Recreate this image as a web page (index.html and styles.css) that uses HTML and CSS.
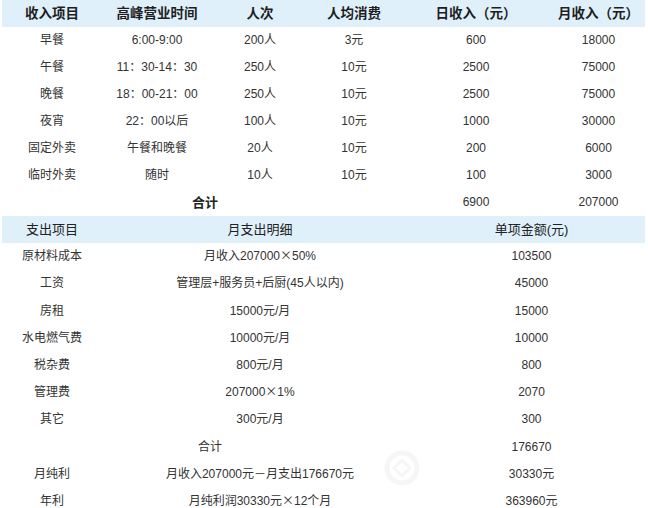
FILE: index.html
```html
<!DOCTYPE html>
<html lang="zh-CN">
<head>
<meta charset="utf-8">
<title>收支表</title>
<link rel="stylesheet" href="styles.css">
</head>
<body>
<div class="page">
  <table class="tbl t1">
    <colgroup>
      <col class="c1"><col class="c2"><col class="c3"><col class="c4"><col class="c5"><col class="c6">
    </colgroup>
    <tr class="head bold">
      <td>收入项目</td><td>高峰营业时间</td><td>人次</td><td>人均消费</td><td>日收入（元）</td><td>月收入（元）</td>
    </tr>
    <tr><td>早餐</td><td>6:00-9:00</td><td>200人</td><td>3元</td><td>600</td><td>18000</td></tr>
    <tr><td>午餐</td><td>11：30-14：30</td><td>250人</td><td>10元</td><td>2500</td><td>75000</td></tr>
    <tr><td>晚餐</td><td>18：00-21：00</td><td>250人</td><td>10元</td><td>2500</td><td>75000</td></tr>
    <tr><td>夜宵</td><td>22：00以后</td><td>100人</td><td>10元</td><td>1000</td><td>30000</td></tr>
    <tr><td>固定外卖</td><td>午餐和晚餐</td><td>20人</td><td>10元</td><td>200</td><td>6000</td></tr>
    <tr><td>临时外卖</td><td>随时</td><td>10人</td><td>10元</td><td>100</td><td>3000</td></tr>
    <tr><td></td><td colspan="2" class="total">合计</td><td></td><td>6900</td><td>207000</td></tr>
  </table>
  <table class="tbl t2">
    <colgroup>
      <col class="d1"><col class="d2"><col class="d3">
    </colgroup>
    <tr class="head">
      <td>支出项目</td><td>月支出明细</td><td>单项金额(元)</td>
    </tr>
    <tr><td>原材料成本</td><td>月收入207000<span class="cjk">×</span>50%</td><td>103500</td></tr>
    <tr><td>工资</td><td>管理层+服务员+后厨(45人以内)</td><td>45000</td></tr>
    <tr><td>房租</td><td>15000元/月</td><td>15000</td></tr>
    <tr><td>水电燃气费</td><td>10000元/月</td><td>10000</td></tr>
    <tr><td>税杂费</td><td>800元/月</td><td>800</td></tr>
    <tr><td>管理费</td><td>207000<span class="cjk">×</span>1%</td><td>2070</td></tr>
    <tr><td>其它</td><td>300元/月</td><td>300</td></tr>
    <tr><td colspan="2">合计</td><td>176670</td></tr>
    <tr><td>月纯利</td><td>月收入207000元<span class="cjk">－</span>月支出176670元</td><td>30330元</td></tr>
    <tr><td>年利</td><td>月纯利润30330元<span class="cjk">×</span>12个月</td><td>363960元</td></tr>
  </table>
  <svg class="watermark" width="40" height="40" viewBox="0 0 40 40" aria-hidden="true">
    <circle cx="20" cy="20" r="15" fill="none" stroke="#000" stroke-width="5"/>
    <path d="M12 20 L20 12 L28 20 L20 28 Z" fill="none" stroke="#000" stroke-width="3"/>
  </svg>
</div>
</body>
</html>
```

FILE: styles.css
```css
html, body {
  margin: 0;
  padding: 0;
  background: #ffffff;
}
.page {
  position: relative;
  width: 648px;
  height: 508px;
  overflow: hidden;
  padding: 0 3px 0 2px;
  box-sizing: border-box;
  font-family: "Liberation Sans", "Noto Sans CJK SC", sans-serif;
  font-size: 12px;
  color: #333333;
}
.tbl {
  width: 643px;
  border-collapse: collapse;
  table-layout: fixed;
}
.tbl td {
  height: 27px;
  padding: 0;
  text-align: center;
  vertical-align: middle;
  white-space: nowrap;
  line-height: 27px;
}
.head td {
  background: #dff0fb;
  color: #222222;
  font-size: 13px;
}
.bold td {
  font-weight: bold;
  font-size: 13.5px;
  color: #1e1e1e;
}
.c1 { width: 100px; }
.c2 { width: 110px; }
.c3 { width: 96px; }
.c4 { width: 92px; }
.c5 { width: 152px; }
.c6 { width: 93px; }
.d1 { width: 100px; }
.d2 { width: 316px; }
.d3 { width: 227px; }
.cjk {
  font-family: "Noto Sans CJK SC", sans-serif;
  line-height: 1;
}
.total {
  font-weight: bold;
  font-size: 13px;
  color: #222222;
}
.t2 td { height: 27.2px; }
.watermark {
  position: absolute;
  left: 382px;
  top: 448px;
  opacity: 0.03;
}
```
